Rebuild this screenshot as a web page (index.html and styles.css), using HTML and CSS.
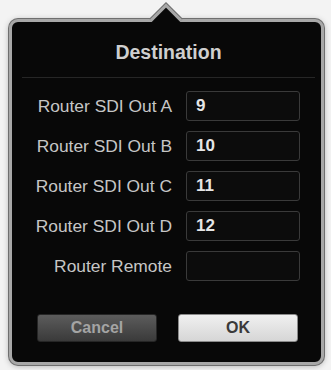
FILE: index.html
```html
<!DOCTYPE html>
<html>
<head>
<meta charset="utf-8">
<link rel="stylesheet" href="styles.css">
</head>
<body>
<div class="popover">
  <svg class="arrow" width="50" height="26" viewBox="0 0 50 26">
    <polyline points="9,20.5 24,5.5 39,20.5" fill="none" stroke="#6f6f6f" stroke-width="5"/>
    <polyline points="9,20.5 24,5.5 39,20.5" fill="none" stroke="#a8a8a8" stroke-width="3"/>
    <polygon points="24,7.8 42.2,26 5.8,26" fill="#080808"/>
  </svg>
  <h1 class="title">Destination</h1>
  <div class="form">
    <div class="label">Router SDI Out A</div><div class="field">9</div>
    <div class="label">Router SDI Out B</div><div class="field">10</div>
    <div class="label">Router SDI Out C</div><div class="field">11</div>
    <div class="label">Router SDI Out D</div><div class="field">12</div>
    <div class="label">Router Remote</div><div class="field"></div>
  </div>
  <div class="actions">
    <button class="btn cancel">Cancel</button>
    <button class="btn ok">OK</button>
  </div>
</div>
</body>
</html>
```
FILE: styles.css
```css
html, body {
  margin: 0;
  padding: 0;
}
body {
  background: #f3f3f3;
  font-family: "Liberation Sans", Arial, sans-serif;
  width: 331px;
  height: 370px;
  overflow: hidden;
}
.popover {
  position: relative;
  box-sizing: border-box;
  margin: 19px 0 0 9px;
  width: 315px;
  height: 346px;
  border: 3px solid #a8a8a8;
  border-radius: 9px;
  background: #080808;
  box-shadow: 0 0 0 1px #6f6f6f, 0 1px 6px rgba(0, 0, 0, 0.3);
}
.arrow {
  position: absolute;
  left: 130px;
  top: -22px;
  display: block;
}
.title {
  margin: 0 6px 0 10px;
  padding: 20px 0 15px;
  height: 20px;
  line-height: 20px;
  font-size: 19.5px;
  font-weight: bold;
  color: #cfcfcf;
  text-align: center;
  border-bottom: 1px solid #262626;
}
.form {
  display: grid;
  grid-template-columns: 160px 114px;
  grid-auto-rows: 30px;
  column-gap: 14px;
  row-gap: 10px;
  margin-top: 13px;
}
.label {
  text-align: right;
  line-height: 30px;
  font-size: 17.4px;
  color: #c6c6c6;
}
.field {
  box-sizing: border-box;
  border: 1px solid #3a3a3a;
  border-radius: 3px;
  background: #0c0c0c;
  padding-left: 9px;
  line-height: 28px;
  font-size: 17px;
  font-weight: bold;
  color: #e6e6e6;
}
.actions {
  display: flex;
  gap: 21px;
  padding-left: 25px;
  margin-top: 33px;
}
.btn {
  box-sizing: border-box;
  width: 120px;
  height: 28px;
  border-radius: 3px;
  font-family: "Liberation Sans", Arial, sans-serif;
  font-size: 16px;
  font-weight: bold;
  padding: 0;
}
.cancel {
  background: linear-gradient(#5c5c5c, #3a3a3a);
  border: 1px solid #262626;
  color: #a4a4a4;
}
.ok {
  background: linear-gradient(#f0f0f0, #d6d6d6);
  border: 1px solid #8a8a8a;
  color: #3a3a3a;
}
```
